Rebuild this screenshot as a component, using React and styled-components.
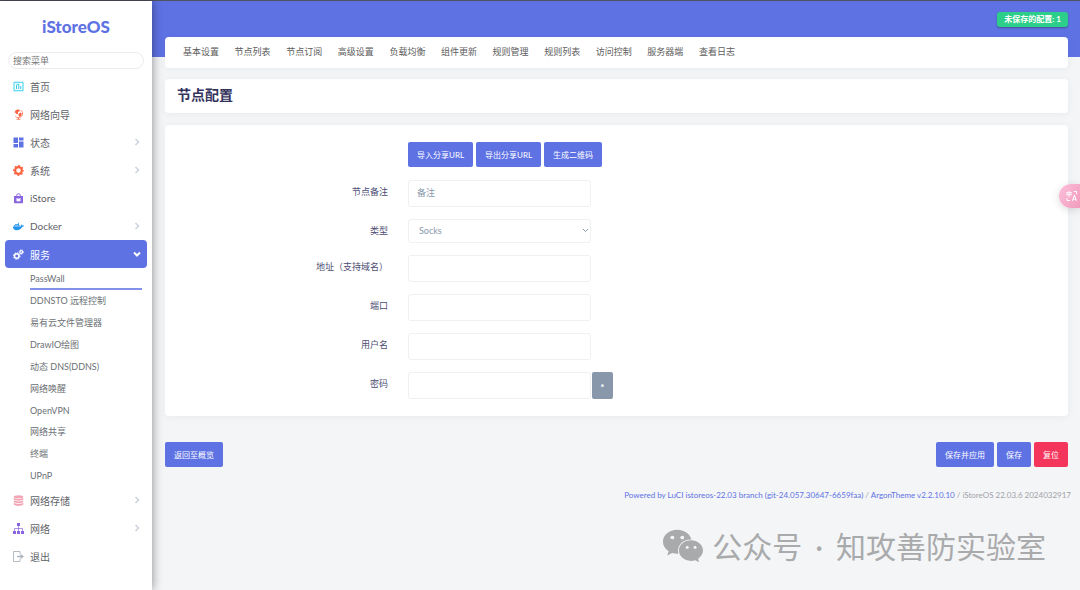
import React from "react";
import styled, { createGlobalStyle, css } from "styled-components";
import { FaDocker, FaWeixin } from "react-icons/fa";

const GlobalStyle = createGlobalStyle`
  :root {
    --primary: #5e72e4;
    --danger: #f5365c;
    --success: #2dce89;
    --muted: #8898aa;
    --label: #4c4c73;
    --heading: #32325d;
    --page: #f4f5f7;
    --radius: 4px;
  }

  * {
    box-sizing: border-box;
  }

  body {
    margin: 0;
    background: var(--page);
  }

  body,
  button,
  input,
  select {
    font-family: Lato, "Noto Sans CJK SC", sans-serif;
  }

  a {
    color: inherit;
    text-decoration: none;
  }

  ul {
    list-style: none;
    margin: 0;
    padding: 0;
  }
`;

const Page = styled.div`
  display: flex;
  min-height: 100vh;
  border-top: 1px solid #50525c;
`;

const Sidebar = styled.aside`
  position: relative;
  z-index: 1;
  flex: 0 0 152px;
  background: #fff;
  box-shadow: 0 0 10px rgba(0, 0, 0, 0.45);
`;

const Brand = styled.a`
  display: block;
  padding: 15px 0;
  color: var(--primary);
  font-size: 17px;
  font-weight: 900;
  line-height: 21px;
  text-align: center;
`;

const Search = styled.input`
  display: block;
  width: calc(100% - 16px);
  height: 17px;
  margin: 0 8px 3px;
  padding: 0 4px 1px;
  border: 1px solid #e9ecef;
  border-radius: 9px;
  background: #fff;
  font-size: 9px;
  outline: none;

  &::placeholder {
    color: #777;
  }
`;

const MenuLink = styled.a`
  display: flex;
  align-items: center;
  gap: 6px;
  height: 28px;
  margin: 0 5px;
  padding: 0 6px 0 8px;
  border-radius: var(--radius);
  color: #5f6368;
  font-size: 10px;

  ${(props) =>
    props.$active &&
    css`
      background: var(--primary);
      color: #fff;
    `}
`;

const MenuIcon = styled.span`
  display: flex;
  width: 11px;
  color: ${(props) => props.$color};

  svg {
    width: 11px;
    height: 11px;
  }
`;

const MenuLabel = styled.span`
  flex: 1;
`;

const Chevron = styled.svg`
  width: 8px;
  height: 8px;
  fill: none;
  stroke: ${(props) => (props.$open ? "#fff" : "#ced4da")};
  stroke-width: ${(props) => (props.$open ? 2 : 1.6)};
`;

const SubMenu = styled.ul`
  padding: 0 10px 0 30px;
`;

const SubLink = styled.a`
  display: block;
  height: ${(props) => (props.$latin ? "21px" : "22px")};
  color: #6b6f74;
  font-size: 9px;
  line-height: 21px;

  ${(props) =>
    props.$active &&
    css`
      height: 22px;
      border-bottom: 2px solid #8290ea;
    `}
`;

const Main = styled.main`
  flex: 1;
  min-width: 0;
`;

const TopBar = styled.header`
  display: flex;
  justify-content: flex-end;
  align-items: flex-start;
  height: 56px;
  padding: 11px 12px 0;
  background: var(--primary);
`;

const Badge = styled.a`
  padding: 0 7px;
  border-radius: 3px;
  background: var(--success);
  box-shadow: 0 1px 2px rgba(0, 0, 0, 0.3);
  color: #fff;
  font-size: 8px;
  font-weight: 700;
  line-height: 15px;
`;

const Content = styled.div`
  margin-top: -20px;
  padding: 0 12px 0 13px;
`;

const Card = styled.section`
  border-radius: var(--radius);
  background: #fff;
  box-shadow: 0 1px 8px rgba(0, 0, 0, 0.05);
`;

const TabBar = styled(Card).attrs({ as: "nav" })`
  margin-bottom: 11px;
  padding: 0 18px 1px;
`;

const Tabs = styled.ul`
  display: flex;
  justify-content: space-between;
  max-width: 552px;
  color: #5c5c5c;
  font-size: 9px;
  line-height: 30px;
  white-space: nowrap;
`;

const TitleCard = styled(Card)`
  margin-bottom: 12px;
  padding: 0 12px 2px;
`;

const Title = styled.h2`
  margin: 0;
  color: var(--heading);
  font-size: 14px;
  font-weight: 700;
  line-height: 32px;
`;

const FormCard = styled(Card)`
  padding: 17px 12px 17px 7px;
`;

const Row = styled.div`
  display: grid;
  grid-template-columns: minmax(0, 1fr) minmax(0, 3fr);
  column-gap: 20px;
  align-items: start;
  margin-bottom: ${(props) => (props.$toolbar ? "13px" : "12px")};

  &:last-child {
    margin-bottom: 0;
  }
`;

const Label = styled.label`
  color: var(--label);
  font-size: 9px;
  line-height: 24px;
  text-align: right;
`;

const Field = styled.div`
  display: flex;
  grid-column: 2;
  gap: 1px;
`;

const ButtonGroup = styled(Field)`
  gap: 3px;
`;

const control = css`
  width: 183px;
  border: 1px solid #eef0f2;
  border-radius: 3px;
  background: #fff;
  color: var(--muted);
  font-size: 9px;
  outline: none;
`;

const Input = styled.input`
  ${control}
  height: 27px;
  padding: 0 8px 2px;

  &::placeholder {
    color: var(--muted);
  }
`;

const SelectBox = styled.div`
  position: relative;

  svg {
    position: absolute;
    top: 8px;
    right: 2px;
    width: 7px;
    height: 7px;
    fill: none;
    stroke: var(--muted);
    pointer-events: none;
  }
`;

const Select = styled.select`
  ${control}
  display: block;
  height: 24px;
  padding: 0 10px 1px;
  appearance: none;
`;

const Button = styled.button`
  height: 25px;
  padding: 0 9px 1px;
  border: 0;
  border-radius: 2px;
  background: ${(props) => (props.$danger ? "var(--danger)" : "var(--primary)")};
  color: #fff;
  font-size: 8px;
  white-space: nowrap;
`;

const Reveal = styled(Button)`
  width: 21px;
  height: 27px;
  padding: 4px 0 0;
  background: var(--muted);
  font-size: 9px;
  font-weight: 900;
`;

const Actions = styled.div`
  display: flex;
  justify-content: space-between;
  margin-top: 26px;
`;

const Footer = styled.footer`
  padding: 22px 9px 0 0;
  color: #a0a3a8;
  font-size: 8px;
  line-height: 12px;
  text-align: right;

  a {
    color: var(--primary);
  }
`;

const Watermark = styled.div`
  display: flex;
  align-items: center;
  justify-content: flex-end;
  gap: 8px;
  padding: 23px 34px 0 0;
  color: #a9aaab;

  svg {
    width: 42px;
    height: 42px;
  }
`;

const WatermarkText = styled.div`
  display: flex;
  gap: 13px;
  font-size: 30px;
  line-height: 44px;
  white-space: nowrap;
`;

const TranslateTab = styled.button`
  position: fixed;
  top: 184px;
  right: 0;
  z-index: 2;
  width: 21px;
  height: 24px;
  padding: 0;
  border: 0;
  border-radius: 12px 0 0 12px;
  background: linear-gradient(120deg, #fbc0dc, #f29bbb);
  box-shadow: 0 2px 8px rgba(0, 0, 0, 0.15);

  svg {
    display: block;
    width: 12px;
    height: 12px;
    margin-left: 7px;
    fill: none;
    stroke: #fff;
  }

  text {
    fill: #fff;
    stroke: none;
    font-weight: 700;
  }
`;

const HomeIcon = () => (
  <svg viewBox="0 0 22 22" fill="none" stroke="currentColor" strokeWidth="2">
    <path d="M2 2.500h18v17H2z" />
    <path d="M7 8v8M11.500 6v10M15.500 10v6M7 6.500h4.500" />
  </svg>
);

const GuideIcon = () => (
  <svg viewBox="0 0 22 22" fill="currentColor">
    <path d="M4 4.500C6 1 11 0 14 2L12.500 5 9.500 6l1 3L7.500 11 6 8 3.500 7.500Z" />
    <path d="M11.500 9.500l4-2.500 2 2.500L16 14l-3 1.500L11 13Z" />
    <path
      d="M16 2.500A8 8 0 0 1 11 17C8.500 17.500 6.500 16.500 5 15M11 17v3.500M7 20.500h8"
      fill="none"
      stroke="currentColor"
      strokeWidth="1.600"
    />
  </svg>
);

const DashboardIcon = () => (
  <svg viewBox="0 0 22 22" fill="currentColor">
    <path d="M1 1h9v11H1zM12 1h9v6h-9zM1 14h9v7H1zM12 9h9v12h-9z" />
  </svg>
);

const GearIcon = () => (
  <svg viewBox="0 0 22 22" fill="none" stroke="currentColor">
    <circle cx="11" cy="11" r="6.700" strokeWidth="4.400" />
    <circle
      cx="11"
      cy="11"
      r="9.500"
      strokeWidth="2.600"
      strokeDasharray="3.731"
      strokeDashoffset="1.865"
    />
  </svg>
);

const StoreIcon = () => (
  <svg viewBox="0 0 22 22" fill="none" stroke="currentColor">
    <path d="M7.500 6V4.500a3.500 3 0 0 1 7 0V6" strokeWidth="2" />
    <path
      d="M2 6h18v13a1.500 1.500 0 0 1-1.500 1.500h-15A1.500 1.500 0 0 1 2 19ZM7 10v6.500h8V10l-4 1.500Z"
      fill="currentColor"
      fillRule="evenodd"
      stroke="none"
    />
  </svg>
);

const CogsIcon = () => (
  <svg viewBox="0 0 22 22" fill="none" stroke="currentColor">
    <circle cx="7.500" cy="14" r="4.500" strokeWidth="3" />
    <circle cx="7.500" cy="14" r="6.600" strokeWidth="2" strokeDasharray="2.592" />
    <circle cx="16.500" cy="6" r="2.800" strokeWidth="2.400" />
    <circle cx="16.500" cy="6" r="4.500" strokeWidth="1.600" strokeDasharray="2.020" />
  </svg>
);

const StorageIcon = () => (
  <svg viewBox="0 0 22 22" fill="currentColor">
    <ellipse cx="11" cy="3.500" rx="9.500" ry="3" />
    <path d="M1.500 5.500c3 3 16 3 19 0v3.500c-3 3-16 3-19 0z" />
    <path d="M1.500 10.500c3 3 16 3 19 0v3.500c-3 3-16 3-19 0z" />
    <path d="M1.500 15.500c3 3 16 3 19 0v3.500c-3 3.300-16 3.300-19 0z" />
  </svg>
);

const NetworkIcon = () => (
  <svg viewBox="0 0 22 22" fill="currentColor">
    <path d="M8 0h6v6H8zM0 16h6v6H0zM8 16h6v6H8zM16 16h6v6h-6z" />
    <path
      d="M11 6v10M3 16v-5h16v5"
      fill="none"
      stroke="currentColor"
      strokeWidth="1.400"
    />
  </svg>
);

const ExitIcon = () => (
  <svg viewBox="0 0 22 22" fill="none" stroke="currentColor" strokeWidth="1.800">
    <path d="M14 6V1H1v20h13v-5" />
    <path d="M8 11h9" strokeWidth="3" />
    <path d="M15 5.500 22 11l-7 5.500Z" fill="currentColor" stroke="none" />
  </svg>
);

const tabs = [
  "基本设置",
  "节点列表",
  "节点订阅",
  "高级设置",
  "负载均衡",
  "组件更新",
  "规则管理",
  "规则列表",
  "访问控制",
  "服务器端",
  "查看日志",
];

const services = [
  { label: "PassWall", latin: true, active: true },
  { label: "DDNSTO 远程控制" },
  { label: "易有云文件管理器" },
  { label: "DrawIO绘图" },
  { label: "动态 DNS(DDNS)" },
  { label: "网络唤醒" },
  { label: "OpenVPN", latin: true },
  { label: "网络共享" },
  { label: "终端" },
  { label: "UPnP", latin: true },
];

const menu = [
  { label: "首页", icon: HomeIcon, color: "#35cfec" },
  { label: "网络向导", icon: GuideIcon, color: "#fb6340" },
  { label: "状态", icon: DashboardIcon, color: "#5e72e4", more: true },
  { label: "系统", icon: GearIcon, color: "#fb6340", more: true },
  { label: "iStore", icon: StoreIcon, color: "#8965e0" },
  { label: "Docker", icon: FaDocker, color: "#2496ed", more: true },
  { label: "服务", icon: CogsIcon, color: "#fff", more: true, children: services },
  { label: "网络存储", icon: StorageIcon, color: "#f3a4b5", more: true },
  { label: "网络", icon: NetworkIcon, color: "#8965e0", more: true },
  { label: "退出", icon: ExitIcon, color: "#adb5bd" },
];

const MenuItem = ({ label, icon: Icon, color, more, children }) => (
  <li>
    <MenuLink href="#" $active={!!children}>
      <MenuIcon $color={color}>
        <Icon />
      </MenuIcon>
      <MenuLabel>{label}</MenuLabel>
      {more && (
        <Chevron viewBox="0 0 8 8" $open={!!children}>
          <path d={children ? "M1 2.500 4 5.500 7 2.500" : "M2.500 1 5.500 4 2.500 7"} />
        </Chevron>
      )}
    </MenuLink>
    {children && (
      <SubMenu>
        {children.map((item) => (
          <li key={item.label}>
            <SubLink href="#" $latin={item.latin} $active={item.active}>
              {item.label}
            </SubLink>
          </li>
        ))}
      </SubMenu>
    )}
  </li>
);

const TextRow = ({ id, label, ...rest }) => (
  <Row>
    <Label htmlFor={id}>{label}</Label>
    <Field>
      <Input id={id} type="text" {...rest} />
    </Field>
  </Row>
);

const App = () => (
  <>
    <GlobalStyle />
    <Page>
      <Sidebar>
        <Brand href="#">iStoreOS</Brand>
        <Search type="text" placeholder="搜索菜单" aria-label="搜索菜单" />
        <ul>
          {menu.map((item) => (
            <MenuItem key={item.label} {...item} />
          ))}
        </ul>
      </Sidebar>
      <Main>
        <TopBar>
          <Badge href="#">未保存的配置: 1</Badge>
        </TopBar>
        <Content>
          <TabBar>
            <Tabs>
              {tabs.map((tab) => (
                <li key={tab}>
                  <a href="#">{tab}</a>
                </li>
              ))}
            </Tabs>
          </TabBar>
          <TitleCard>
            <Title>节点配置</Title>
          </TitleCard>
          <FormCard>
            <Row $toolbar>
              <ButtonGroup>
                <Button type="button">导入分享URL</Button>
                <Button type="button">导出分享URL</Button>
                <Button type="button">生成二维码</Button>
              </ButtonGroup>
            </Row>
            <TextRow id="remarks" label="节点备注" placeholder="备注" />
            <Row>
              <Label htmlFor="type">类型</Label>
              <Field>
                <SelectBox>
                  <Select id="type" defaultValue="Socks">
                    <option>Socks</option>
                  </Select>
                  <svg viewBox="0 0 7 7">
                    <path d="M1 2 3.500 4.500 6 2" />
                  </svg>
                </SelectBox>
              </Field>
            </Row>
            <TextRow id="address" label="地址（支持域名）" />
            <TextRow id="port" label="端口" />
            <TextRow id="username" label="用户名" />
            <Row>
              <Label htmlFor="password">密码</Label>
              <Field>
                <Input id="password" type="password" />
                <Reveal type="button">*</Reveal>
              </Field>
            </Row>
          </FormCard>
          <Actions>
            <Button type="button">返回至概览</Button>
            <ButtonGroup>
              <Button type="button">保存并应用</Button>
              <Button type="button">保存</Button>
              <Button type="button" $danger>
                复位
              </Button>
            </ButtonGroup>
          </Actions>
        </Content>
        <Footer>
          <a href="#">Powered by LuCI istoreos-22.03 branch (git-24.057.30647-6659faa)</a>
          {" / "}
          <a href="#">ArgonTheme v2.2.10.10</a>
          {" / iStoreOS 22.03.6 2024032917"}
        </Footer>
        <Watermark>
          <FaWeixin />
          <WatermarkText>
            <span>公众号</span>
            <span>·</span>
            <span>知攻善防实验室</span>
          </WatermarkText>
        </Watermark>
      </Main>
    </Page>
    <TranslateTab type="button" aria-label="翻译">
      <svg viewBox="0 0 12 12">
        <text x="0" y="6" fontSize="6">
          中
        </text>
        <text x="6" y="11" fontSize="7">
          A
        </text>
        <path d="M8 1.500h2.500V4M1 8v2.500h3" />
      </svg>
    </TranslateTab>
  </>
);

export default App;
